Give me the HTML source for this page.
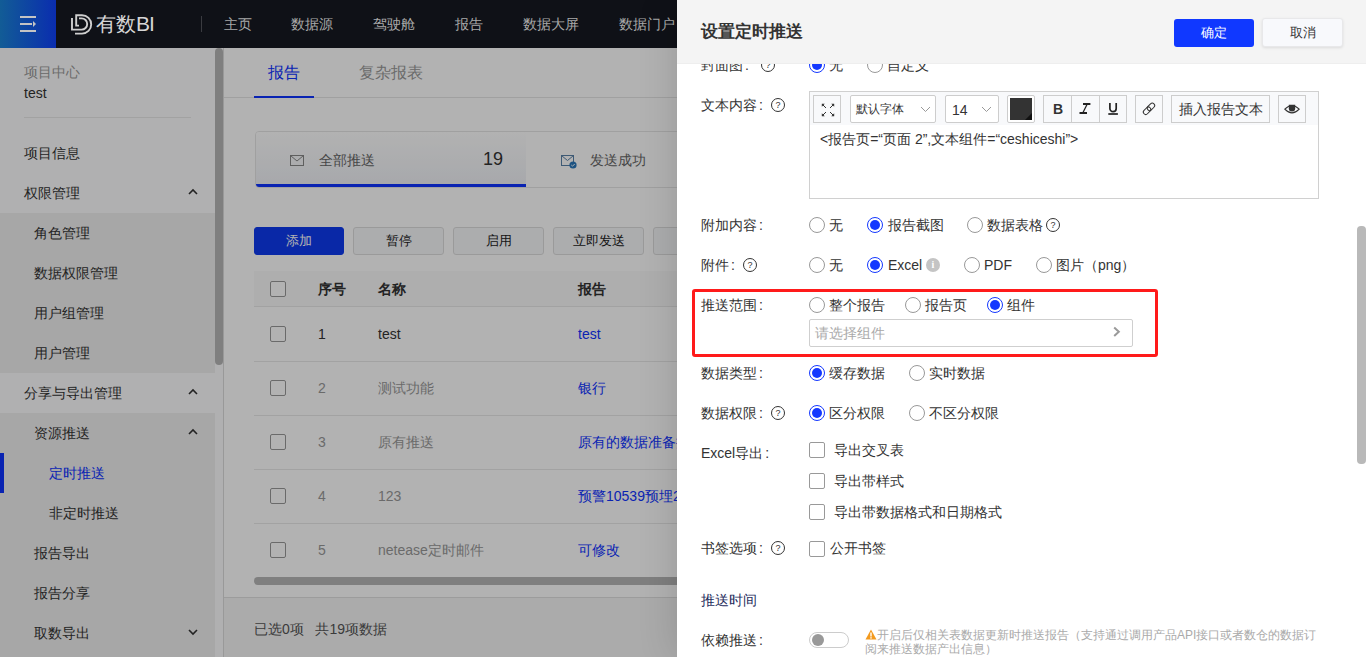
<!DOCTYPE html>
<html><head><meta charset="utf-8">
<style>
*{box-sizing:border-box;margin:0;padding:0}
html,body{width:1366px;height:657px;overflow:hidden;background:#fff}
body{font-family:"Liberation Sans",sans-serif;font-size:14px;color:#333;position:relative}
.a{position:absolute;white-space:nowrap}
/* header */
#hdr{position:absolute;left:0;top:0;width:1366px;height:48px;background:#0f1117;z-index:5}
#ham{position:absolute;left:0;top:0;width:56px;height:48px;background:linear-gradient(90deg,#125c96,#0a2daf)}
.nav{position:absolute;top:16px;color:#a9a9a9;font-size:14px;line-height:16px}
/* sidebar */
#side{position:absolute;left:0;top:48px;width:223px;height:609px;background:#fdfdfe}
.mi{position:absolute;left:24px;font-size:14px;line-height:16px;color:#333}
.sub{position:absolute;left:0;width:215px;background:#efefef}
.arr{position:absolute;left:188px;width:10px;height:10px}
/* main */
#main{position:absolute;left:223px;top:48px;width:1143px;height:609px;background:#fff;z-index:0}
.btn{position:absolute;top:227px;height:28px;border:1px solid #ddd;border-radius:3px;background:#f7f8fa;font-size:13px;text-align:center;line-height:26px;color:#222}
.cb{position:absolute;width:16px;height:16px;border:1px solid #999;border-radius:2px;background:#fff}
.row{position:absolute;left:254px;width:500px;height:1px;background:#ddd}
.cell{position:absolute;font-size:14px;line-height:16px}
#mask{position:absolute;left:0;top:0;width:1366px;height:657px;background:rgba(0,0,0,0.3)}
/* drawer */
#drw{position:absolute;left:677px;top:0;width:689px;height:657px;background:#fff;z-index:10;box-shadow:-2px 0 36px rgba(0,0,0,0.14)}
.c{margin-left:2px}
.lbl{position:absolute;left:24px;font-size:14px;line-height:16px;color:#333}
.rd{position:absolute;width:16px;height:16px;border:1px solid #999;border-radius:50%;background:#fff}
.rd.on{border-color:#1438ff}
.rd.on:after{content:"";position:absolute;left:2px;top:2px;width:10px;height:10px;border-radius:50%;background:#1438ff}
.rt{position:absolute;font-size:14px;line-height:16px;color:#333}
.q{position:absolute;width:14px;height:14px;border:1px solid #333;border-radius:50%;font-size:9px;line-height:12px;text-align:center;color:#333}
.tb{position:absolute;top:95px;height:28px;border:1px solid #cdcdcd;background:#f8f9fb}
</style></head><body>

<div id="hdr">
  <div id="ham">
    <div class="a" style="left:20px;top:16px;width:16px;height:2px;background:#c4c4c4"></div>
    <div class="a" style="left:20px;top:23px;width:12px;height:2px;background:#c4c4c4"></div>
    <div class="a" style="left:33px;top:21px;width:0;height:0;border-left:3px solid #c4c4c4;border-top:3px solid transparent;border-bottom:3px solid transparent"></div>
    <div class="a" style="left:20px;top:30px;width:16px;height:2px;background:#c4c4c4"></div>
  </div>
  <svg class="a" style="left:66px;top:10px" width="30" height="28" viewBox="66 10 30 28"><path d="M79 25.6H76.2V15.2H82A9.2 9.2 0 0 1 82 33.6H75" fill="none" stroke="#cfcfcf" stroke-width="1.9"/><path d="M72 18V29.6H81.6A5.6 5.6 0 0 0 81.6 18.4H79" fill="none" stroke="#cfcfcf" stroke-width="1.9"/></svg>
  <div class="a" style="left:96px;top:12px;font-size:20px;line-height:24px;color:#d6d6d6">有数<span style="font-size:21px;letter-spacing:-1px">B</span><span style="font-size:21px">I</span></div>
  <div class="a" style="left:201px;top:16px;width:1px;height:16px;background:#3a3b40"></div>
  <div class="nav" style="left:224px">主页</div>
  <div class="nav" style="left:291px">数据源</div>
  <div class="nav" style="left:373px">驾驶舱</div>
  <div class="nav" style="left:455px">报告</div>
  <div class="nav" style="left:523px">数据大屏</div>
  <div class="nav" style="left:619px">数据门户</div>
</div>

<div id="side">
  <div class="mi" style="top:16px;color:#999">项目中心</div>
  <div class="mi" style="top:37px">test</div>
  <div class="a" style="left:24px;top:69px;width:167px;height:1px;background:#e8e8e8"></div>
  <div class="mi" style="top:97px">项目信息</div>
  <div class="mi" style="top:137px">权限管理</div>
  <div class="sub" style="top:165px;height:160px"></div>
  <div class="mi" style="left:34px;top:177px">角色管理</div>
  <div class="mi" style="left:34px;top:217px">数据权限管理</div>
  <div class="mi" style="left:34px;top:257px">用户组管理</div>
  <div class="mi" style="left:34px;top:297px">用户管理</div>
  <div class="mi" style="top:337px">分享与导出管理</div>
  <div class="sub" style="top:365px;height:244px"></div>
  <div class="mi" style="left:34px;top:377px">资源推送</div>
  <div class="a" style="left:0;top:405px;width:4px;height:40px;background:#0e33ff"></div>
  <div class="mi" style="left:49px;top:417px;color:#0e33ff">定时推送</div>
  <div class="mi" style="left:49px;top:457px">非定时推送</div>
  <div class="mi" style="left:34px;top:497px">报告导出</div>
  <div class="mi" style="left:34px;top:537px">报告分享</div>
  <div class="mi" style="left:34px;top:577px">取数导出</div>
  <svg class="arr" style="top:139px" viewBox="0 0 10 10"><path d="M1 7l4-4 4 4" fill="none" stroke="#333" stroke-width="1.6"/></svg>
  <svg class="arr" style="top:339px" viewBox="0 0 10 10"><path d="M1 7l4-4 4 4" fill="none" stroke="#333" stroke-width="1.6"/></svg>
  <svg class="arr" style="top:379px" viewBox="0 0 10 10"><path d="M1 7l4-4 4 4" fill="none" stroke="#333" stroke-width="1.6"/></svg>
  <svg class="arr" style="top:579px" viewBox="0 0 10 10"><path d="M1 3l4 4 4-4" fill="none" stroke="#333" stroke-width="1.6"/></svg>
  <div class="a" style="left:215px;top:0;width:8px;height:609px;background:#fdfdfe"></div>
  <div class="a" style="left:215px;top:0px;width:8px;height:317px;border-radius:4px;background:#b6b6b6"></div>
</div>

<div id="main">
  <div class="a" style="left:0;top:0;width:1px;height:609px;background:#dcdcdc;z-index:1"></div>
  <div class="a" style="left:0;top:49px;width:1143px;height:1px;background:#e6e6e6"></div>
  <div class="a" style="left:45px;top:16px;font-size:16px;line-height:18px;color:#0e33ff">报告</div>
  <div class="a" style="left:31px;top:48px;width:60px;height:2px;background:#0e33ff"></div>
  <div class="a" style="left:136px;top:16px;font-size:16px;line-height:18px;color:#999">复杂报表</div>
  <!-- stat cards -->
  <div class="a" style="left:32px;top:83px;width:700px;height:57px;border:1px solid #e6e6e6;border-radius:4px;background:#fff;overflow:hidden"><div class="a" style="left:0;top:0;width:270px;height:55px;background:linear-gradient(#fff,#eff1f6)"></div><div class="a" style="left:0;top:52px;width:270px;height:3px;background:#0e33ff"></div></div>
  <svg class="a" style="left:67px;top:107px" width="14" height="12" viewBox="0 0 14 12"><rect x="0.5" y="0.5" width="13" height="10" fill="none" stroke="#888" stroke-width="1"/><path d="M0.8 0.8L7 6l6.2-5.2" fill="none" stroke="#888" stroke-width="1"/></svg>
  <div class="a" style="left:96px;top:104px;font-size:14px;line-height:16px;color:#666">全部推送</div>
  <div class="a" style="left:260px;top:101px;font-size:18px;line-height:20px;color:#333">19</div>
  <svg class="a" style="left:338px;top:107px" width="17" height="14" viewBox="0 0 17 14"><rect x="0.5" y="0.5" width="12" height="10" fill="none" stroke="#5a82a8" stroke-width="1"/><path d="M0.8 0.8L6.5 5.5l5.7-4.7" fill="none" stroke="#5a82a8" stroke-width="1"/><circle cx="12" cy="10" r="3.6" fill="#2a78bb"/><path d="M10.3 10l1.2 1.2 2.2-2.2" fill="none" stroke="#fff" stroke-width="1"/></svg>
  <div class="a" style="left:367px;top:104px;font-size:14px;line-height:16px;color:#666">发送成功</div>
  <!-- buttons -->
  <div class="btn" style="left:31px;top:179px;width:90px;background:#0e3af0;border-color:#0e3af0;color:#fff">添加</div>
  <div class="btn" style="left:130px;top:179px;width:91px">暂停</div>
  <div class="btn" style="left:230px;top:179px;width:91px">启用</div>
  <div class="btn" style="left:330px;top:179px;width:91px">立即发送</div>
  <div class="btn" style="left:430px;top:179px;width:91px"></div>
  <!-- table -->
  <div class="a" style="left:31px;top:223px;width:1100px;height:36px;background:#fafafa"></div>
  <div class="a" style="left:31px;top:258px;width:1100px;height:1px;background:#e8e8e8"></div>
  <div class="cb" style="left:47px;top:233px"></div>
  <div class="cell" style="left:95px;top:233px;font-weight:bold">序号</div>
  <div class="cell" style="left:155px;top:233px;font-weight:bold">名称</div>
  <div class="cell" style="left:355px;top:233px;font-weight:bold">报告</div>
  <div class="a" style="left:31px;top:313px;width:1100px;height:1px;background:#e8e8e8"></div>
  <div class="a" style="left:31px;top:367px;width:1100px;height:1px;background:#e8e8e8"></div>
  <div class="a" style="left:31px;top:421px;width:1100px;height:1px;background:#e8e8e8"></div>
  <div class="a" style="left:31px;top:475px;width:1100px;height:1px;background:#e8e8e8"></div>
  <div class="cb" style="left:47px;top:278px"></div>
  <div class="cb" style="left:47px;top:332px"></div>
  <div class="cb" style="left:47px;top:386px"></div>
  <div class="cb" style="left:47px;top:440px"></div>
  <div class="cb" style="left:47px;top:494px"></div>
  <div class="cell" style="left:95px;top:278px">1</div>
  <div class="cell" style="left:155px;top:278px">test</div>
  <div class="cell" style="left:355px;top:278px;color:#0e33ff">test</div>
  <div class="cell" style="left:95px;top:332px;color:#999">2</div>
  <div class="cell" style="left:155px;top:332px;color:#999">测试功能</div>
  <div class="cell" style="left:355px;top:332px;color:#0e33ff">银行</div>
  <div class="cell" style="left:95px;top:386px;color:#999">3</div>
  <div class="cell" style="left:155px;top:386px;color:#999">原有推送</div>
  <div class="cell" style="left:355px;top:386px;color:#0e33ff">原有的数据准备推送</div>
  <div class="cell" style="left:95px;top:440px;color:#999">4</div>
  <div class="cell" style="left:155px;top:440px;color:#999">123</div>
  <div class="cell" style="left:355px;top:440px;color:#0e33ff">预警10539预埋2</div>
  <div class="cell" style="left:95px;top:494px;color:#999">5</div>
  <div class="cell" style="left:155px;top:494px;color:#999">netease定时邮件</div>
  <div class="cell" style="left:355px;top:494px;color:#0e33ff">可修改</div>
  <div class="a" style="left:31px;top:529px;width:1100px;height:8px;border-radius:4px;background:#b6b6b6"></div>
  <div class="a" style="left:0;top:549px;width:1143px;height:60px;background:#f5f5f5;border-top:1px solid #e0e0e0"></div>
  <div class="a" style="left:31px;top:573px;font-size:14px;line-height:16px;color:#555">已选0项&nbsp;&nbsp;&nbsp;共19项数据</div>
</div>

<div id="mask"></div>

<div id="drw">
  <!-- body content (absolute coordinates relative to drawer) -->
  <div class="lbl" style="top:57px">封面图<span class="c">:</span></div>
  <div class="q" style="left:84px;top:58px">?</div>
  <div class="rd on" style="left:132px;top:57px"></div><div class="rt" style="left:152px;top:57px">无</div>
  <div class="rd" style="left:190px;top:57px"></div><div class="rt" style="left:210px;top:57px">自定义</div>

  <div class="lbl" style="top:97px">文本内容<span class="c">:</span></div>
  <div class="q" style="left:94px;top:98px">?</div>
  <div class="a" style="left:132px;top:91px;width:510px;height:108px;border:1px solid #d0d0d0;background:#fff"></div>
  <div class="a" style="left:133px;top:92px;width:508px;height:33px;background:#f8f9fb"></div>
  <div class="tb" style="left:136px;width:28px"><svg class="a" style="left:-1px;top:-1px" width="28" height="28" viewBox="0 0 28 28"><path d="M9.5 9.5l3.5 3.5M20.5 9.5l-3.5 3.5M9.5 20.5l3.5-3.5M20.5 20.5l-3.5-3.5" stroke="#333" stroke-width="1" fill="none"/><path d="M8.8 8.8h3l-3 3zM21.2 8.8h-3l3 3zM8.8 21.2h3l-3-3zM21.2 21.2h-3l3-3z" fill="#333"/></svg></div>
  <div class="tb" style="left:173px;width:86px;background:#fff;border-radius:2px"><div class="a" style="left:5px;top:6px;font-size:12px;line-height:14px;color:#333">默认字体</div><svg class="a" style="left:69px;top:10px" width="11" height="7" viewBox="0 0 11 7"><path d="M1 1l4.5 4.5L10 1" fill="none" stroke="#999" stroke-width="1"/></svg></div>
  <div class="tb" style="left:268px;width:54px;background:#fff;border-radius:2px"><div class="a" style="left:6px;top:6px;font-size:14px;line-height:16px;color:#333">14</div><svg class="a" style="left:35px;top:10px" width="11" height="7" viewBox="0 0 11 7"><path d="M1 1l4.5 4.5L10 1" fill="none" stroke="#999" stroke-width="1"/></svg></div>
  <div class="tb" style="left:330px;width:28px;background:#fff;border-radius:2px"><div class="a" style="left:2px;top:2px;width:22px;height:22px;background:#333"></div><div class="a" style="left:17px;top:17px;width:0;height:0;border-left:7px solid transparent;border-bottom:7px solid #111"></div></div>
  <div class="tb" style="left:366px;width:84px"></div>
  <div class="a" style="left:394px;top:95px;width:1px;height:28px;background:#cdcdcd"></div>
  <div class="a" style="left:422px;top:95px;width:1px;height:28px;background:#cdcdcd"></div>
  <div class="a" style="left:376px;top:101px;font-size:14px;line-height:16px;font-weight:bold;color:#333">B</div>
  <div class="tb" style="left:458px;width:28px"></div>
  <div class="tb" style="left:494px;width:99px"><div class="a" style="left:7px;top:5px;font-size:14px;line-height:16px;color:#333">插入报告文本</div></div>
  <div class="tb" style="left:601px;width:28px"></div>
  <svg class="a" style="left:0;top:0" width="689" height="130" viewBox="0 0 689 130">
    <path d="M406 104h7.4M402.5 113h7.5" stroke="#222" stroke-width="1.8" fill="none"/>
    <path d="M410 104.5L406 112.5" stroke="#222" stroke-width="1.3" fill="none"/>
    <path d="M432.9 103v5.5a3.15 3.15 0 0 0 6.3 0V103" stroke="#222" stroke-width="1.7" fill="none"/>
    <path d="M431.3 114h9.6" stroke="#222" stroke-width="1.7" fill="none"/>
    <g transform="rotate(-45 472 108.8)" fill="none" stroke="#333" stroke-width="1"><rect x="465" y="106.4" width="8.5" height="4.8" rx="2.4"/><rect x="470.5" y="106.4" width="8.5" height="4.8" rx="2.4"/></g>
    <path d="M607.8 109.2Q615 101.8 622.2 109.2Q615 116.6 607.8 109.2Z" stroke="#333" stroke-width="1.1" fill="none"/>
    <path d="M611.8 104.8h6.4v3.5a3.2 3.2 0 0 1-6.4 0z" fill="#333"/>
  </svg>
  <div class="a" style="left:143px;top:131px;font-size:14px;line-height:16px;color:#333">&lt;报告页=“页面 2”,文本组件=“ceshiceshi”&gt;</div>

  <div class="lbl" style="top:217px">附加内容<span class="c">:</span></div>
  <div class="rd" style="left:132px;top:217px"></div><div class="rt" style="left:152px;top:217px">无</div>
  <div class="rd on" style="left:190px;top:217px"></div><div class="rt" style="left:211px;top:217px">报告截图</div>
  <div class="rd" style="left:290px;top:217px"></div><div class="rt" style="left:310px;top:217px">数据表格</div>
  <div class="q" style="left:369px;top:218px">?</div>

  <div class="lbl" style="top:257px">附件<span class="c">:</span></div>
  <div class="q" style="left:66px;top:258px">?</div>
  <div class="rd" style="left:132px;top:257px"></div><div class="rt" style="left:152px;top:257px">无</div>
  <div class="rd on" style="left:190px;top:257px"></div><div class="rt" style="left:211px;top:257px">Excel</div>
  <div class="a" style="left:249px;top:258px;width:14px;height:14px;border-radius:50%;background:#c4c4c4;color:#fff;font-size:10px;line-height:14px;text-align:center;font-weight:bold;font-family:'Liberation Serif',serif">i</div>
  <div class="rd" style="left:287px;top:257px"></div><div class="rt" style="left:307px;top:257px">PDF</div>
  <div class="rd" style="left:359px;top:257px"></div><div class="rt" style="left:379px;top:257px">图片（png）</div>

  <div class="a" style="left:15px;top:289px;width:466px;height:68px;border:3px solid #ff1a1a;border-radius:3px"></div>
  <div class="lbl" style="top:297px">推送范围<span class="c">:</span></div>
  <div class="rd" style="left:132px;top:297px"></div><div class="rt" style="left:152px;top:297px">整个报告</div>
  <div class="rd" style="left:228px;top:297px"></div><div class="rt" style="left:248px;top:297px">报告页</div>
  <div class="rd on" style="left:310px;top:297px"></div><div class="rt" style="left:330px;top:297px">组件</div>
  <div class="a" style="left:132px;top:319px;width:324px;height:28px;border:1px solid #cfcfcf;border-radius:2px;background:#fff"></div>
  <div class="rt" style="left:138px;top:325px;color:#aaa">请选择组件</div>
  <svg class="a" style="left:436px;top:326px" width="8" height="12" viewBox="0 0 8 12"><path d="M1.2 1.6L5.8 5.8 1.2 10" fill="none" stroke="#9a9a9a" stroke-width="2"/></svg>

  <div class="lbl" style="top:365px">数据类型<span class="c">:</span></div>
  <div class="rd on" style="left:132px;top:365px"></div><div class="rt" style="left:152px;top:365px">缓存数据</div>
  <div class="rd" style="left:232px;top:365px"></div><div class="rt" style="left:252px;top:365px">实时数据</div>

  <div class="lbl" style="top:405px">数据权限<span class="c">:</span></div>
  <div class="q" style="left:94px;top:406px">?</div>
  <div class="rd on" style="left:132px;top:405px"></div><div class="rt" style="left:152px;top:405px">区分权限</div>
  <div class="rd" style="left:232px;top:405px"></div><div class="rt" style="left:252px;top:405px">不区分权限</div>

  <div class="lbl" style="top:445px">Excel导出<span class="c">:</span></div>
  <div class="cb" style="left:132px;top:442px;border-color:#999"></div><div class="rt" style="left:157px;top:442px">导出交叉表</div>
  <div class="cb" style="left:132px;top:473px;border-color:#999"></div><div class="rt" style="left:157px;top:473px">导出带样式</div>
  <div class="cb" style="left:132px;top:504px;border-color:#999"></div><div class="rt" style="left:157px;top:504px">导出带数据格式和日期格式</div>

  <div class="lbl" style="top:540px">书签选项<span class="c">:</span></div>
  <div class="q" style="left:94px;top:541px">?</div>
  <div class="cb" style="left:132px;top:541px;border-color:#999"></div><div class="rt" style="left:153px;top:540px">公开书签</div>

  <div class="lbl" style="top:592px;color:#1f2d5c">推送时间</div>

  <div class="lbl" style="top:632px">依赖推送<span class="c">:</span></div>
  <div class="a" style="left:132px;top:632px;width:40px;height:16px;border:1px solid #ccc;border-radius:8px;background:#fff"></div>
  <div class="a" style="left:135px;top:634px;width:12px;height:12px;border-radius:50%;background:#999"></div>
  <div class="a" style="left:188px;top:628px;width:460px;font-size:12px;line-height:14px;color:#aaa;white-space:normal">
    <svg width="12" height="11" viewBox="0 0 12 11" style="vertical-align:-1px"><path d="M6 0.5L11.5 10.5H0.5z" fill="#f39a1e"/><rect x="5.3" y="3.5" width="1.4" height="4" fill="#fff"/><rect x="5.3" y="8.2" width="1.4" height="1.4" fill="#fff"/></svg>开启后仅相关表数据更新时推送报告（支持通过调用产品API接口或者数仓的数据订阅来推送数据产出信息）</div>

  <div class="a" style="left:680px;top:226px;width:9px;height:238px;border-radius:4px;background:#b9b9b9"></div>

  <!-- drawer header -->
  <div class="a" style="left:0;top:0;width:689px;height:64px;background:#f4f4f4;border-bottom:1px solid #eeeeee"></div>
  <div class="a" style="left:24px;top:22px;font-size:17px;line-height:20px;font-weight:bold;color:#333">设置定时推送</div>
  <div class="a" style="left:497px;top:19px;width:80px;height:28px;border-radius:3px;background:#1038ff;color:#fff;font-size:13px;line-height:28px;text-align:center">确定</div>
  <div class="a" style="left:585px;top:18px;width:81px;height:29px;border-radius:3px;background:#f8f9fc;border:1px solid #e8e8ea;color:#333;font-size:13px;line-height:27px;text-align:center;box-shadow:0 1px 3px rgba(0,0,0,0.1)">取消</div>
</div>

</body></html>
